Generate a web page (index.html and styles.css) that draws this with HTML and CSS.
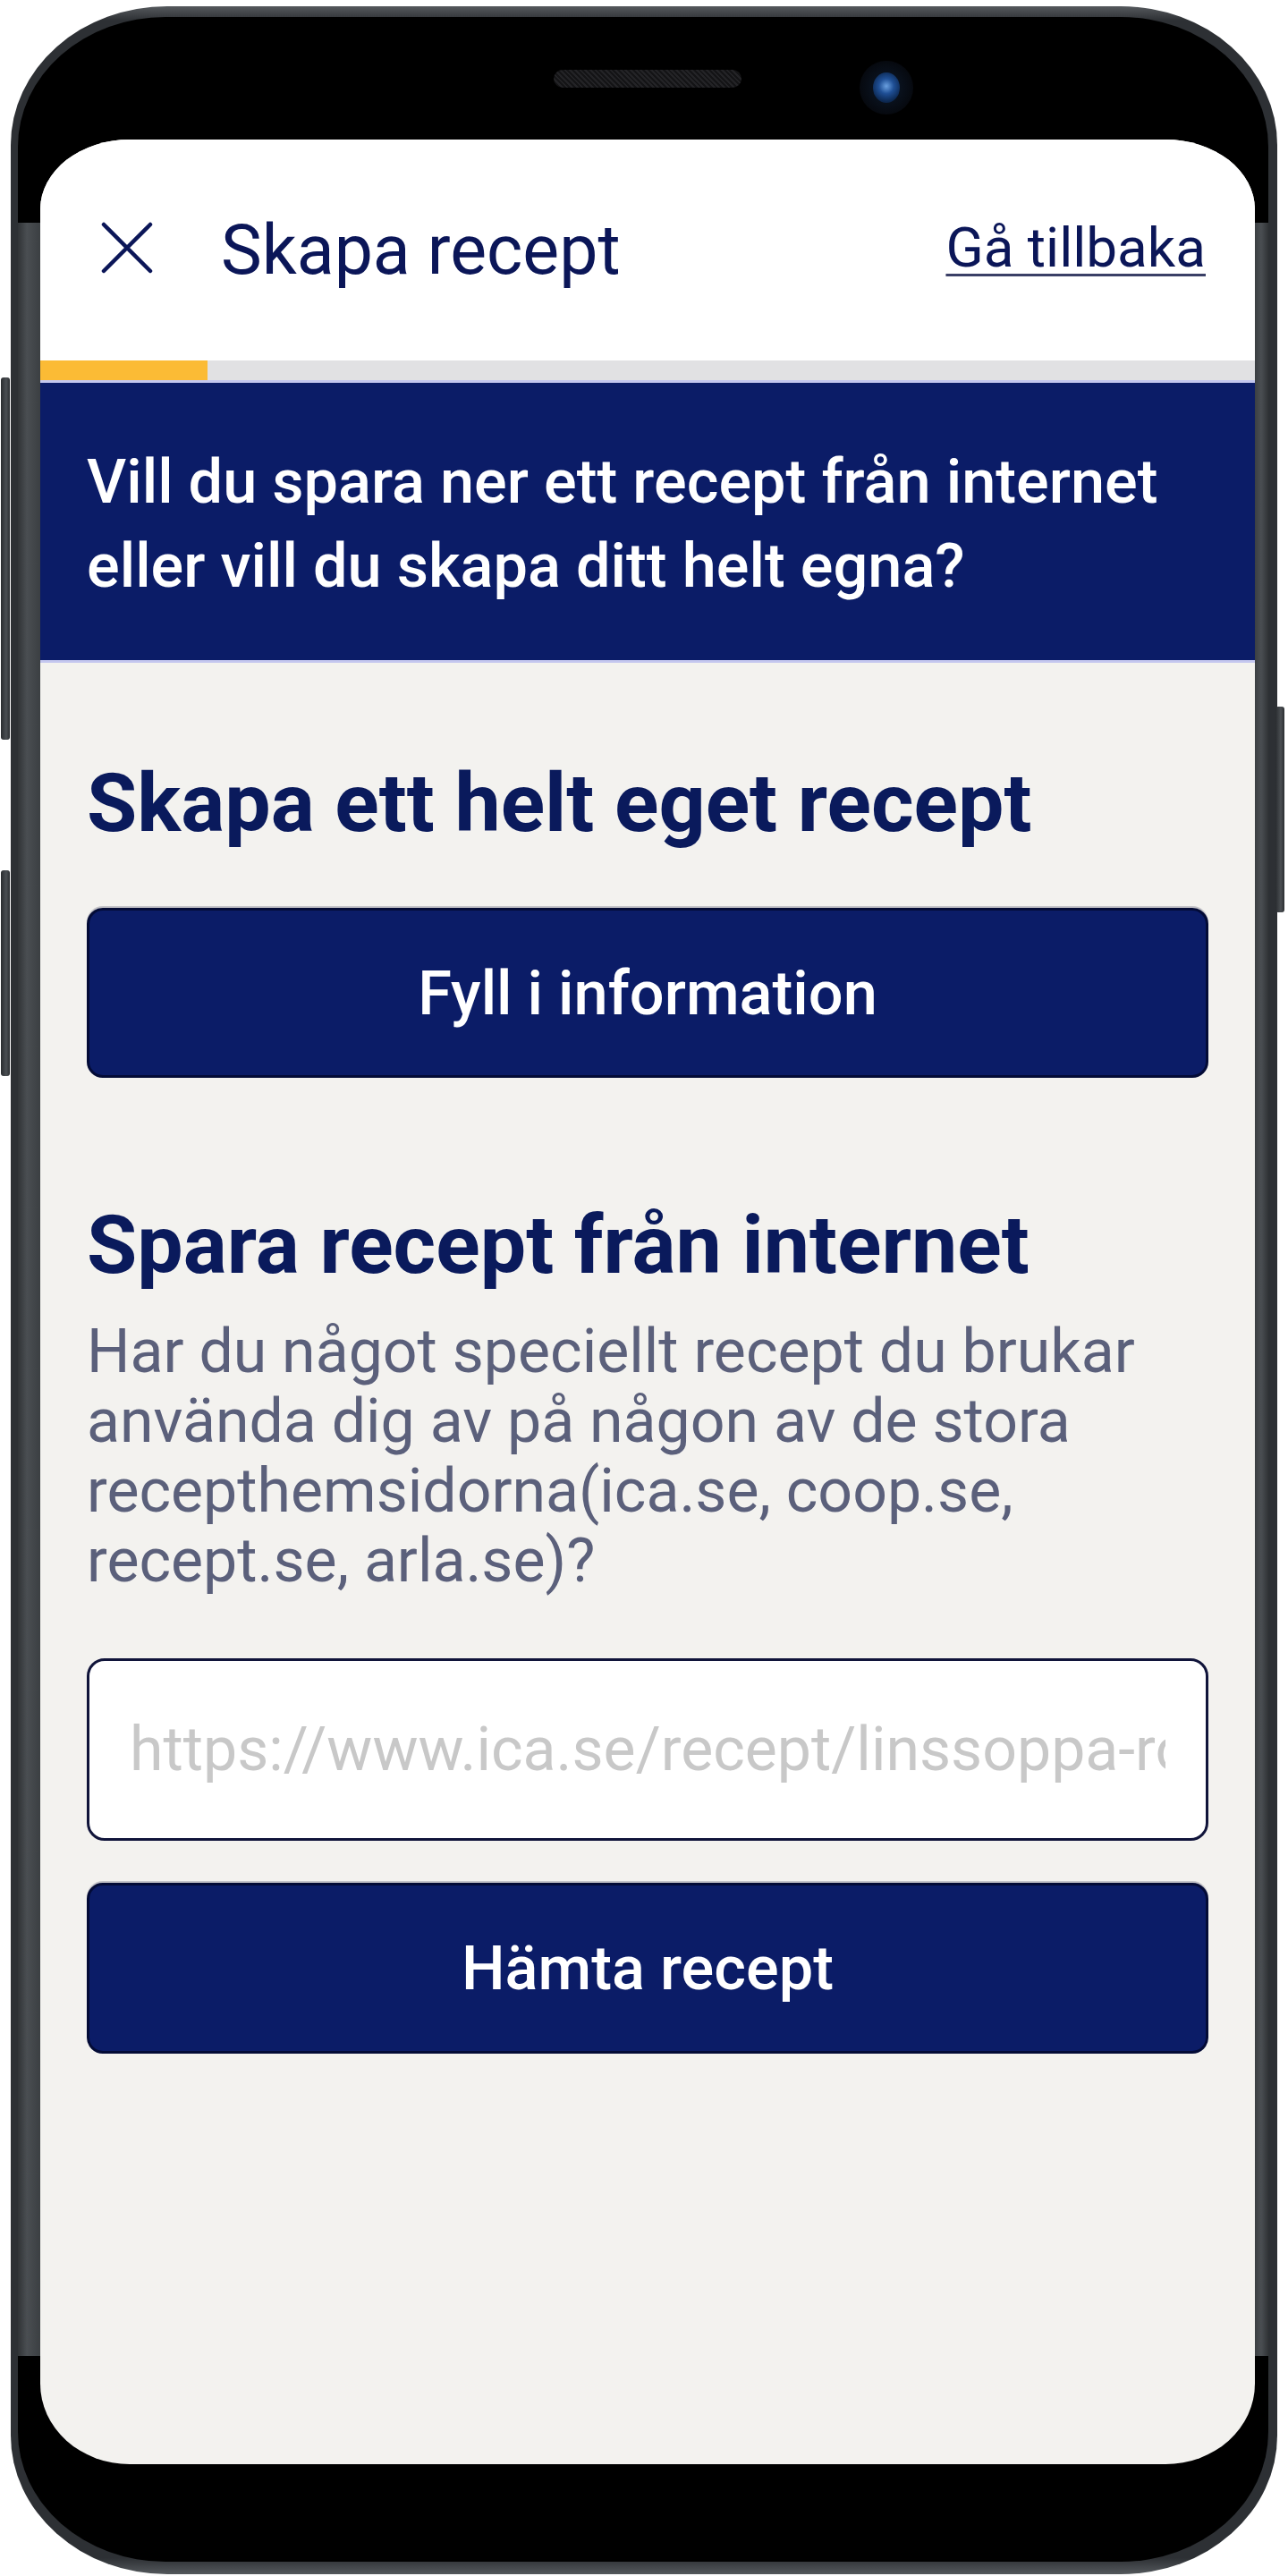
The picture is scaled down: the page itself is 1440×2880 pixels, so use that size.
FILE: index.html
```html
<!DOCTYPE html>
<html lang="sv">
<head>
<meta charset="utf-8">
<title>Skapa recept</title>
<link rel="stylesheet" href="styles.css">
</head>
<body>
<div class="phone">
  <span class="side-btn side-btn--l1"></span>
  <span class="side-btn side-btn--l2"></span>
  <span class="side-btn side-btn--r1"></span>
  <div class="bezel">
    <div class="top-bezel">
      <span class="speaker"></span>
      <span class="camera"><span class="lens"></span></span>
    </div>
    <div class="screen">
      <header class="appbar">
        <svg class="close" viewBox="0 0 58 58" aria-hidden="true">
          <path d="M3 3 L55 55 M55 3 L3 55" stroke="#0b1658" stroke-width="4.5" stroke-linecap="round" fill="none"/>
        </svg>
        <h1 class="title">Skapa recept</h1>
        <a class="back" href="#">Gå tillbaka</a>
      </header>
      <div class="progress"><div class="progress-fill" style="width: 13.8%"></div></div>
      <section class="banner">
        <p class="banner-text">Vill du spara ner ett recept från internet eller vill du skapa ditt helt egna?</p>
      </section>
      <main class="content">
        <h2 class="heading heading--first">Skapa ett helt eget recept</h2>
        <button class="primary-btn primary-btn--fill" type="button">Fyll i information</button>
        <h2 class="heading heading--second">Spara recept från internet</h2>
        <p class="lead">Har du något speciellt recept du brukar använda dig av på någon av de stora recepthemsidorna(ica.se, coop.se, recept.se, arla.se)?</p>
        <input class="url-input" type="text" placeholder="https://www.ica.se/recept/linssoppa-rostad-paprika/">
        <button class="primary-btn primary-btn--fetch" type="button">Hämta recept</button>
      </main>
    </div>
  </div>
</div>
</body>
</html>
```

FILE: styles.css
```css
* { box-sizing: border-box; }

html, body {
  margin: 0;
  padding: 0;
  background: #ffffff;
}

body {
  font-family: Roboto, "Noto Sans", "Liberation Sans", sans-serif;
  width: 1440px;
  height: 2880px;
  overflow: hidden;
}

/* ---------- phone frame ---------- */
.phone {
  position: relative;
  width: 1416px;
  height: 2871px;
  margin: 7px 0 0 12px;
  padding: 12px 10px 14px 8px;
  border-radius: 175px / 155px;
  background: linear-gradient(180deg, #55595d 0px, #2d3034 16px, #2d3034 calc(100% - 18px), #55595d 100%);
}

.side-btn {
  position: absolute;
  width: 10px;
  background: linear-gradient(90deg, #2a2d30, #4b4f53 60%, #2a2d30);
  border-radius: 3px;
}
.side-btn--l1 { left: -11px; top: 415px; height: 405px; }
.side-btn--l2 { left: -11px; top: 966px; height: 230px; }
.side-btn--r1 { right: -8px; top: 783px; height: 230px; }

.bezel {
  height: 100%;
  display: flex;
  flex-direction: column;
  padding: 0 15px 0 25px;
  border-radius: 165px / 145px;
  background:
    linear-gradient(90deg, #303336 0px, #4a4e52 10px, #3b3f42 25px) left 0 top 230px / 25px calc(100% - 460px) no-repeat,
    linear-gradient(270deg, #303336 0px, #4a4e52 8px, #3b3f42 15px) right 0 top 230px / 15px calc(100% - 460px) no-repeat,
    #000000;
}

.top-bezel {
  height: 137px;
  flex: none;
  display: flex;
  align-items: flex-start;
}

.speaker {
  width: 210px;
  height: 20px;
  margin: 59px 0 0 574px;
  border-radius: 10px;
  background:
    repeating-linear-gradient(45deg, #141416 0 2px, #232326 2px 4px),
    #1a1a1c;
}

.camera {
  width: 60px;
  height: 60px;
  margin: 49px 0 0 132px;
  border-radius: 50%;
  background: radial-gradient(circle, #0d1a2c 0%, #06090f 70%, #000 100%);
  display: flex;
  align-items: center;
  justify-content: center;
}

.lens {
  width: 30px;
  height: 34px;
  border-radius: 50%;
  background: radial-gradient(circle at 50% 45%, #6aa0e0 0%, #1f4f95 35%, #0d2a55 70%, #061428 100%);
}

/* ---------- screen ---------- */
.screen {
  width: 1358px;
  height: 2599px;
  flex: none;
  overflow: hidden;
  display: flex;
  flex-direction: column;
  background: #f3f2ef;
  border-radius: 100px 100px 100px 100px / 78px 78px 90px 90px;
}

.appbar {
  height: 247px;
  flex: none;
  display: flex;
  align-items: center;
  padding: 0 55px 0 68px;
  background: #ffffff;
}

.close {
  width: 58px;
  height: 58px;
  flex: none;
  margin-bottom: 6px;
}

.title {
  margin: 0 0 0 76px;
  font-size: 77px;
  font-weight: 400;
  line-height: normal;
  color: #0b1658;
}

.back {
  margin: 0 0 6px auto;
  font-size: 62px;
  font-weight: 400;
  color: #0b1658;
  text-decoration: underline;
  text-decoration-thickness: 3px;
  text-underline-offset: 8px;
  text-decoration-color: #3a3f66;
}

.progress {
  height: 25px;
  flex: none;
  background: #e1e1e3;
  border-bottom: 3px solid #c4c7ef;
}

.progress-fill {
  height: 100%;
  background: #fbbb35;
}

.banner {
  flex: none;
  padding: 64px 52px 58px;
  background: #0b1c67;
  border-bottom: 3px solid #c4c7ef;
}

.banner-text {
  margin: 0;
  font-size: 68.5px;
  font-weight: 500;
  line-height: 94px;
  color: #ffffff;
}

.content {
  flex: 1;
  display: flex;
  flex-direction: column;
  padding: 0 52px;
}

.heading {
  margin: 0;
  font-size: 91.5px;
  font-weight: 700;
  line-height: 108px;
  color: #0a1a5c;
}
.heading--first { margin-top: 103px; }
.heading--second { margin-top: 133px; }

.primary-btn {
  display: block;
  width: 100%;
  margin: 0;
  padding: 0;
  border: 3px solid #030b36;
  border-radius: 18px;
  background: #0b1c67;
  color: #ffffff;
  font-family: inherit;
  font-size: 68.5px;
  font-weight: 500;
  box-shadow: 0 -2px 0 #c3c3c8;
}
.primary-btn--fill { height: 190px; margin-top: 63px; }
.primary-btn--fetch { height: 191px; margin-top: 47px; }

.lead {
  margin: 26px 0 0;
  font-size: 68px;
  line-height: 78px;
  font-weight: 400;
  color: #5b607b;
}

.url-input {
  display: block;
  width: 100%;
  height: 204px;
  margin-top: 70px;
  padding: 0 45px;
  border: 3px solid #10143a;
  border-radius: 20px;
  background: #ffffff;
  font-family: inherit;
  font-size: 68px;
  color: #222;
  outline: none;
}
.url-input::placeholder { color: #c8c8c8; }
```
